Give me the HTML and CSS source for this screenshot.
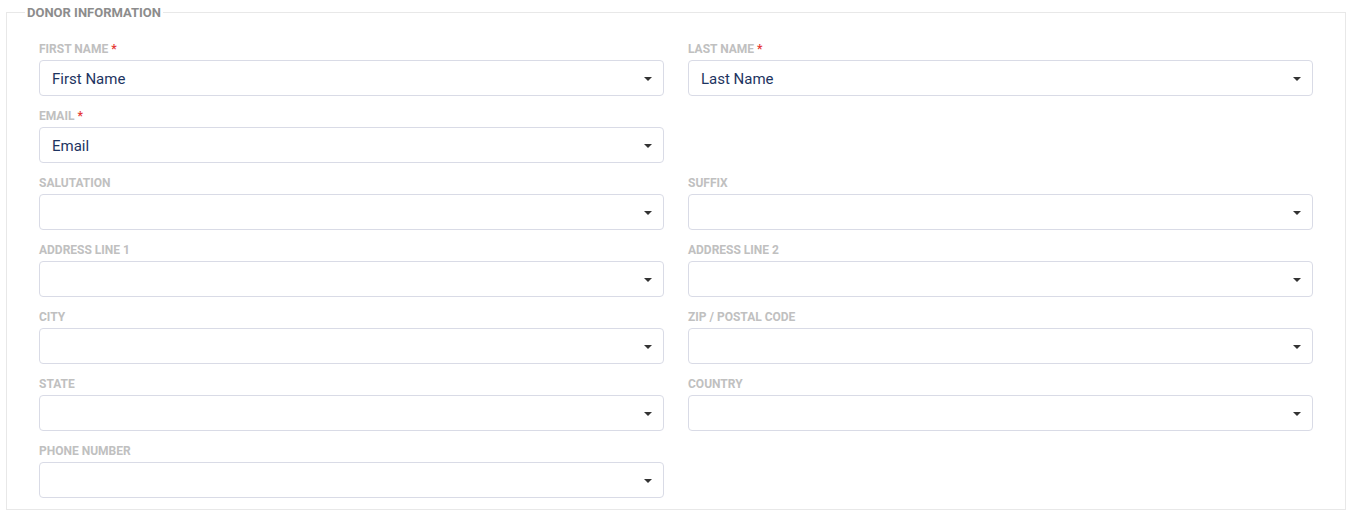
FILE: index.html
```html
<!DOCTYPE html>
<html>
<head>
<meta charset="utf-8">
<link rel="stylesheet" href="styles.css">
</head>
<body>
<section class="group">
  <span class="legend">DONOR INFORMATION</span>
  <div class="grid">
    <div class="field"><div class="label">FIRST NAME <span class="req">*</span></div><div class="select"><span class="value">First Name</span><span class="caret"></span></div></div>
    <div class="field"><div class="label">LAST NAME <span class="req">*</span></div><div class="select"><span class="value">Last Name</span><span class="caret"></span></div></div>
    <div class="field"><div class="label">EMAIL <span class="req">*</span></div><div class="select"><span class="value">Email</span><span class="caret"></span></div></div>
    <div class="field empty"></div>
    <div class="field"><div class="label">SALUTATION</div><div class="select"><span class="value"></span><span class="caret"></span></div></div>
    <div class="field"><div class="label">SUFFIX</div><div class="select"><span class="value"></span><span class="caret"></span></div></div>
    <div class="field"><div class="label">ADDRESS LINE 1</div><div class="select"><span class="value"></span><span class="caret"></span></div></div>
    <div class="field"><div class="label">ADDRESS LINE 2</div><div class="select"><span class="value"></span><span class="caret"></span></div></div>
    <div class="field"><div class="label">CITY</div><div class="select"><span class="value"></span><span class="caret"></span></div></div>
    <div class="field"><div class="label">ZIP / POSTAL CODE</div><div class="select"><span class="value"></span><span class="caret"></span></div></div>
    <div class="field"><div class="label">STATE</div><div class="select"><span class="value"></span><span class="caret"></span></div></div>
    <div class="field"><div class="label">COUNTRY</div><div class="select"><span class="value"></span><span class="caret"></span></div></div>
    <div class="field"><div class="label">PHONE NUMBER</div><div class="select"><span class="value"></span><span class="caret"></span></div></div>
  </div>
</section>
</body>
</html>
```
FILE: styles.css
```css
* { box-sizing: border-box; }
html, body { margin: 0; padding: 0; background: #fff; }
body { font-family: Roboto, "Liberation Sans", sans-serif; }
.group {
  position: relative;
  margin: 12px 6px 0 6px;
  border: 1px solid #e8e8e8;
  padding: 28px 32px 11px 32px;
}
.legend {
  position: absolute;
  left: 18px;
  top: -8px;
  background: #fff;
  padding: 0 2px;
  font-size: 13px;
  line-height: 15px;
  font-weight: 700;
  color: #8c8c8c;
}
.grid {
  display: grid;
  grid-template-columns: 1fr 1fr;
  column-gap: 24px;
  row-gap: 12px;
}
.field { display: flex; flex-direction: column; }
.label {
  font-size: 12px;
  line-height: 16px;
  font-weight: 700;
  color: #c0c0c0;
  margin-bottom: 5px;
  height: 14px;
  white-space: nowrap;
}
.req { color: #e53935; }
.select {
  height: 36px;
  border: 1px solid #d9dbe6;
  border-radius: 4px;
  display: flex;
  align-items: center;
  padding: 0 11px 0 12px;
}
.value {
  flex: 1;
  font-size: 15px;
  line-height: 18px;
  padding-top: 2px;
  color: #1d3461;
}
.caret {
  width: 0;
  height: 0;
  margin-top: 2px;
  border-left: 4px solid transparent;
  border-right: 4px solid transparent;
  border-top: 4px solid #333;
}
```
